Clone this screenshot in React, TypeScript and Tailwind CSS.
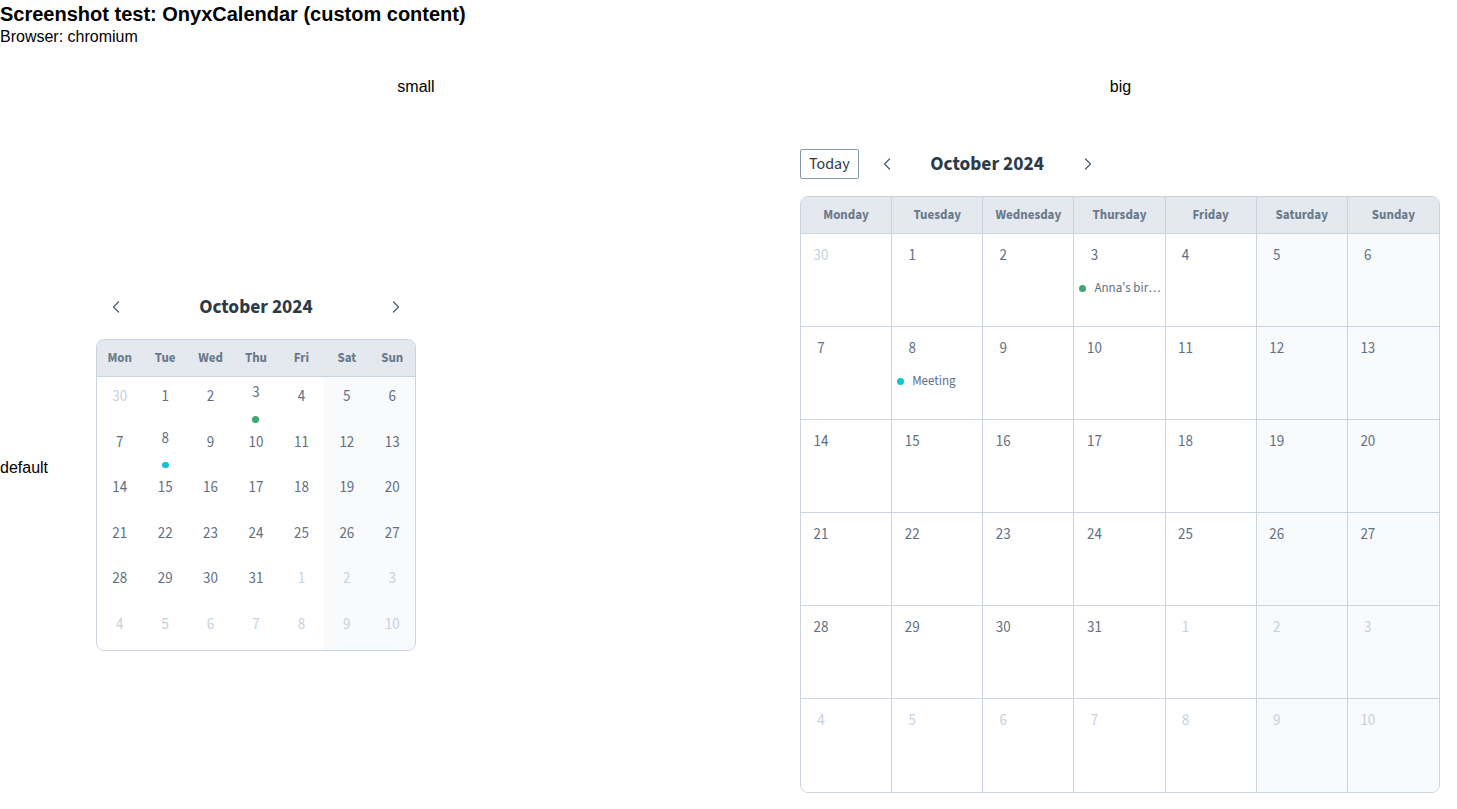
import { ChevronLeft, ChevronRight } from 'lucide-react';

type Day = { n: number; muted?: boolean; event?: { label: string; color: string } };

const events: Record<number, { label: string; color: string }> = {
  3: { label: "Anna's birthday", color: 'bg-[#3da674]' },
  8: { label: 'Meeting', color: 'bg-[#0fc3cf]' },
};

const buildDays = (): Day[] => {
  const days: Day[] = [{ n: 30, muted: true }];
  for (let i = 1; i <= 31; i++) days.push({ n: i, event: events[i] });
  for (let i = 1; i <= 10; i++) days.push({ n: i, muted: true });
  return days;
};

const days = buildDays();
const shortNames = ['Mon', 'Tue', 'Wed', 'Thu', 'Fri', 'Sat', 'Sun'];
const longNames = ['Monday', 'Tuesday', 'Wednesday', 'Thursday', 'Friday', 'Saturday', 'Sunday'];

const calFont = "font-['Source_Sans_3','Source_Sans_Pro',Lato,sans-serif]";

function SmallCalendar() {
  return (
    <div className={`w-[320px] ${calFont}`}>
      <div className="flex h-[32px] items-center justify-between px-[10px] pt-[2px] text-[#4f5e6e]">
        <ChevronLeft size={20} strokeWidth={1.5} />
        <span className="pt-[2px] text-[19.4px] font-bold text-[#2c3a48]">October 2024</span>
        <ChevronRight size={20} strokeWidth={1.5} />
      </div>
      <div className="mt-[17px] overflow-hidden rounded-lg border border-[#c9d4de]">
        <div className="grid h-[37px] grid-cols-7 items-center border-b border-[#c9d4de] bg-[#e3e9ef] pt-[1px]">
          {shortNames.map((d) => (
            <span key={d} className="text-center text-[13px] font-bold text-[#6b7a8b]">
              {d}
            </span>
          ))}
        </div>
        <div className="grid grid-cols-7">
          {days.map((d, i) => {
            const weekend = i % 7 >= 5;
            return (
              <div
                key={i}
                className={`flex h-[45.5px] flex-col items-center ${d.event ? 'pt-[4px]' : 'pt-[8px]'} ${weekend ? 'bg-[#f8fafc]' : 'bg-white'}`}
              >
                <span
                  className={`h-[24px] text-[15px] leading-[24px] ${d.muted ? 'text-[#c5d1dc]' : 'text-[#5f7083]'}`}
                >
                  {d.n}
                </span>
                {d.event && <span className={`mt-[11px] h-[7px] w-[7px] rounded-full ${d.event.color}`} />}
              </div>
            );
          })}
        </div>
      </div>
    </div>
  );
}

function BigCalendar() {
  return (
    <div className={`w-[640px] ${calFont}`}>
      <div className="flex h-[32px] items-center">
        <button className="h-[30px] rounded-[2px] border border-[#8898aa] px-[8px] text-[16px] text-[#2d3a48]">
          Today
        </button>
        <span className="ml-[12px] flex w-[32px] justify-center text-[#4f5e6e]">
          <ChevronLeft size={20} strokeWidth={1.5} />
        </span>
        <span className="w-[169px] pt-[2px] text-center text-[19.4px] font-bold text-[#2c3a48]">October 2024</span>
        <span className="flex w-[32px] justify-center text-[#4f5e6e]">
          <ChevronRight size={20} strokeWidth={1.5} />
        </span>
      </div>
      <div className="mt-[16px] overflow-hidden rounded-lg border border-[#c9d4de]">
        <div className="grid h-[37px] grid-cols-7 border-b border-[#c9d4de] bg-[#e3e9ef]">
          {longNames.map((d, i) => (
            <span
              key={d}
              className={`flex items-center justify-center pt-[1px] text-[13px] font-bold text-[#6b7a8b] ${i < 6 ? 'border-r border-[#c9d4de]' : ''}`}
            >
              {d}
            </span>
          ))}
        </div>
        <div className="grid grid-cols-7">
          {days.map((d, i) => {
            const weekend = i % 7 >= 5;
            const lastCol = i % 7 === 6;
            const lastRow = i >= 35;
            return (
              <div
                key={i}
                className={`flex h-[93px] min-w-0 flex-col pt-[11px] ${weekend ? 'bg-[#f8fafc]' : 'bg-white'} ${lastCol ? '' : 'border-r border-[#c9d4de]'} ${lastRow ? '' : 'border-b border-[#c9d4de]'}`}
              >
                <span
                  className={`ml-[6px] h-[22px] w-[28px] text-center text-[15px] leading-[22px] ${d.muted ? 'text-[#c5d1dc]' : 'text-[#5f7083]'}`}
                >
                  {d.n}
                </span>
                {d.event && (
                  <div className="mt-[12px] flex min-w-0 items-center gap-[8px] pl-[5px] pr-[2px]">
                    <span className={`h-[7px] w-[7px] shrink-0 rounded-full ${d.event.color}`} />
                    <span className="truncate text-[13px] text-[#5f7083]">{d.event.label}</span>
                  </div>
                )}
              </div>
            );
          })}
        </div>
      </div>
    </div>
  );
}

export default function App() {
  return (
    <div className="font-['Liberation_Sans',Arial,sans-serif] text-black">
      <div className="text-[20px] font-bold leading-[28px]">Screenshot test: OnyxCalendar (custom content)</div>
      <div className="text-[16px] leading-[18px]">Browser: chromium</div>
      <div className="mt-[31px] grid grid-cols-[48px_736px_673px]">
        <div />
        <div className="text-center text-[16px] leading-[20px]">small</div>
        <div className="text-center text-[16px] leading-[20px]">big</div>
        <div className="flex items-center pb-[8px] text-[16px]">default</div>
        <div className="flex items-center pb-[53px] pl-[48px] pt-[51px]">
          <SmallCalendar />
        </div>
        <div className="flex items-center pb-[53px] pl-[16px] pt-[51px]">
          <BigCalendar />
        </div>
      </div>
    </div>
  );
}
